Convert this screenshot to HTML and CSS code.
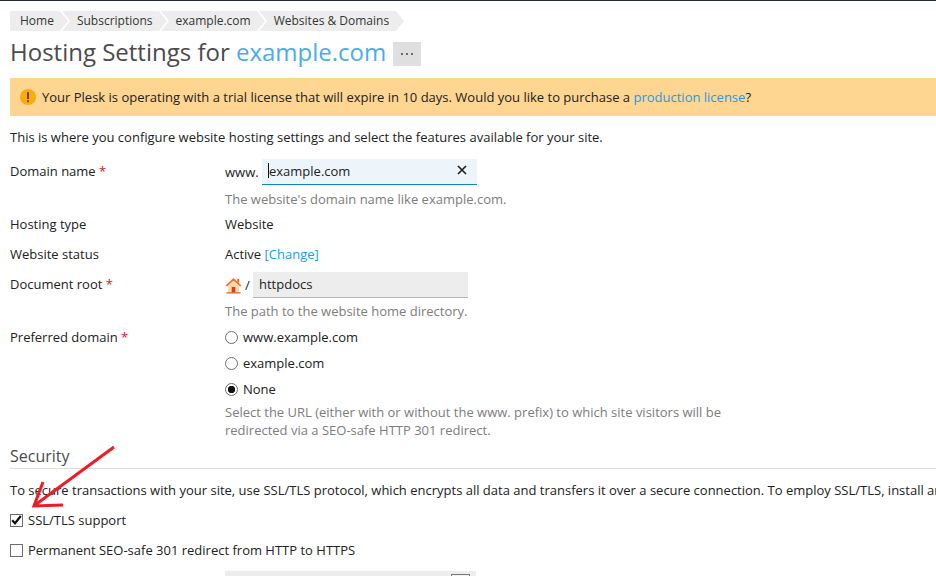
FILE: index.html
```html
<!DOCTYPE html>
<html lang="en">
<head>
<meta charset="utf-8">
<title>Hosting Settings for example.com</title>
<link rel="stylesheet" href="styles.css">
</head>
<body>
<div class="page">
  <nav class="crumbs">
    <a class="crumb first">Home</a>
    <a class="crumb">Subscriptions</a>
    <a class="crumb">example.com</a>
    <a class="crumb last">Websites &amp; Domains</a>
  </nav>
  <div class="title-row">
    <h1 class="title">Hosting Settings for <a class="title-link">example.com</a></h1>
    <button class="more" type="button" aria-label="More"><span class="dot"></span><span class="dot"></span><span class="dot"></span></button>
  </div>
  <div class="banner">
    <svg class="warn" width="16" height="16" viewBox="0 0 16 16"><circle cx="8" cy="8" r="8" fill="#fbab0e"/><rect x="7" y="3" width="2" height="7" fill="#6b4a05"/><rect x="7" y="11.2" width="2" height="2" fill="#6b4a05"/></svg>
    <span>Your Plesk is operating with a trial license that will expire in 10 days. Would you like to purchase a <a class="link">production license</a>?</span>
  </div>
  <p class="intro">This is where you configure website hosting settings and select the features available for your site.</p>

  <div class="form">
    <div class="label label-domain">Domain name <span class="req">*</span></div>
    <div class="field">
      <div class="line">
        <span class="www">www.</span>
        <div class="input active"><span class="caret"></span><span>example.com</span>
          <svg class="clear" width="10" height="10" viewBox="0 0 10 10"><path d="M1 1L9 9M9 1L1 9" stroke="#222" stroke-width="1.7"/></svg>
        </div>
      </div>
      <div class="hint hint-domain">The website's domain name like example.com.</div>
    </div>

    <div class="label label-type">Hosting type</div>
    <div class="field value value-type">Website</div>

    <div class="label label-status">Website status</div>
    <div class="field value value-status">Active <a class="link">[Change]</a></div>

    <div class="label label-root">Document root <span class="req">*</span></div>
    <div class="field field-root">
      <div class="line">
        <svg class="home" width="17" height="17" viewBox="0 0 17 17">
          <path d="M0.5 8.5L8.5 1L16.5 8.5L15 9.5L8.5 3.8L2 9.5Z" fill="#f0762a"/>
          <path d="M3 9L8.5 4.2L14 9V15.5H3Z" fill="#fdd9a8"/>
          <rect x="6.7" y="10" width="3.6" height="5.5" fill="#d8401a"/>
          <rect x="1.5" y="15.2" width="14" height="1.3" fill="#e2631f"/>
          <rect x="12.4" y="1.8" width="1.8" height="3.6" fill="#e2631f"/>
        </svg>
        <span class="slash">/</span>
        <div class="input readonly">httpdocs</div>
      </div>
      <div class="hint hint-root">The path to the website home directory.</div>
    </div>

    <div class="label label-pref">Preferred domain <span class="req">*</span></div>
    <div class="field field-pref">
      <div class="radio-row"><span class="radio"></span>www.example.com</div>
      <div class="radio-row"><span class="radio"></span>example.com</div>
      <div class="radio-row"><span class="radio on"></span>None</div>
      <div class="hint hint-pref">Select the URL (either with or without the www. prefix) to which site visitors will be<br>redirected via a SEO-safe HTTP 301 redirect.</div>
    </div>
  </div>

  <h2 class="section">Security</h2>
  <p class="sec-intro">To secure transactions with your site, use SSL/TLS protocol, which encrypts all data and transfers it over a secure connection. To employ SSL/TLS, install an</p>
  <div class="check-row">
    <span class="check on"><svg width="11" height="10" viewBox="0 0 11 10"><path d="M1.2 5.2L4 8.2L9.8 1" fill="none" stroke="#111" stroke-width="2.2"/></svg></span>SSL/TLS support
  </div>
  <div class="check-row second"><span class="check"></span>Permanent SEO-safe 301 redirect from HTTP to HTTPS</div>
  <div class="cert-row"><div class="select"><span class="select-btn"></span></div></div>

  <svg class="arrow" width="130" height="80" viewBox="0 0 130 80">
    <path d="M114 7L35 65M43 42L34 66L63 65" fill="none" stroke="#ee1c25" stroke-width="3"/>
  </svg>
</div>
</body>
</html>
```
FILE: styles.css
```css
* { box-sizing: border-box; }
html, body { margin: 0; padding: 0; overflow: hidden; background: #fff; }
body { width: 936px; height: 576px; font: 13px/18px "Open Sans", "Liberation Sans", sans-serif; color: #222; }
.page { position: relative; width: 936px; height: 576px; overflow: hidden; border-top: 1px solid #1f2933; padding: 10px 0 0 10px; }
a { text-decoration: none; }
.link { color: #1e9be6; }

.crumbs { display: flex; height: 20px; font-size: 12px; line-height: 20px; color: #353535; }
.crumb { position: relative; background: #ededed; padding: 0 6px 0 15px; margin-right: 2px; white-space: nowrap; }
.crumb::before { content: ""; position: absolute; z-index: 0; left: 0; top: 0; border-style: solid; border-width: 10px 0 10px 8px; border-color: transparent transparent transparent #fff; }
.crumb::after { content: ""; position: absolute; z-index: 1; left: 100%; top: 0; border-style: solid; border-width: 10px 0 10px 8px; border-color: transparent transparent transparent #ededed; }
.crumb.first { padding-left: 10px; padding-right: 6px; }
.crumb.first::before { display: none; }
.crumb.last { padding-right: 7px; }

.title-row { display: flex; align-items: center; margin-top: 4px; height: 34px; }
.title { margin: 0; font-size: 24px; line-height: 34px; font-weight: 400; color: #4b4b4b; white-space: nowrap; }
.title-link { color: #4aaceb; }
.more { display: flex; align-items: center; justify-content: center; gap: 3px; width: 28px; height: 24px; margin: 4px 0 0 7px; padding: 0; border: 0; background: #dfdfdf; }
.dot { width: 2px; height: 2px; background: #444; border-radius: 50%; }

.banner { display: flex; align-items: center; gap: 6px; height: 38px; margin-top: 9px; padding-left: 10px; background: #fed591; color: #222; white-space: nowrap; }
.warn { flex: none; }

.intro { margin: 12px 0 0; line-height: 18px; }

.form { display: grid; grid-template-columns: 215px 1fr; margin-top: 13px; }
.label, .field { min-width: 0; }
.req { color: #d9131a; }
.label-domain { padding-top: 3px; }
.line { display: flex; align-items: center; }
.www { width: 37px; }
.input { position: relative; display: flex; align-items: center; height: 26px; }
.active { width: 215px; padding: 0 0 2px 6px; background: #edf5fb; border-bottom: 1px solid #0a87c8; }
.caret { width: 1px; height: 15px; background: #111; }
.clear { position: absolute; right: 10px; top: 6px; }
.hint { color: #7d7d7d; line-height: 18px; }
.hint-domain { margin-top: 5px; }
.label-type, .value-type { margin-top: 7px; }
.label-status, .value-status { margin-top: 12px; }
.label-root { margin-top: 12px; }
.field-root { margin-top: 9px; }
.home { flex: none; }
.slash { width: 11px; padding-left: 3px; }
.readonly { width: 215px; padding: 0 0 2px 6px; background: #ededed; border-bottom: 1px solid #b5b5b5; }
.hint-root { margin-top: 4px; }
.label-pref { margin-top: 8px; }
.field-pref { margin-top: 8px; }
.radio-row { display: flex; align-items: center; height: 18px; margin-bottom: 8px; }
.radio { width: 13px; height: 13px; margin-right: 5px; border: 1px solid #6d6d6d; border-radius: 50%; background: #fff; }
.radio.on { background: radial-gradient(circle, #111 0, #111 3.4px, #fff 4px); }
.hint-pref { margin-top: -3px; line-height: 18px; }

.section { margin: 6px 0 0; height: 24px; font-size: 16px; line-height: 22px; font-weight: 400; color: #4b4b4b; border-bottom: 1px solid #dcdcdc; }
.sec-intro { margin: 12px 0 0; white-space: nowrap; }
.check-row { display: flex; align-items: center; height: 18px; margin-top: 12px; }
.check-row.second { margin-top: 12px; }
.check { display: flex; align-items: center; justify-content: center; width: 13px; height: 13px; margin-right: 5px; border: 1px solid #6d6d6d; background: #fff; }
.cert-row { margin: 12px 0 0 215px; }
.select { position: relative; width: 251px; height: 20px; background: #ededed; }
.select-btn { position: absolute; right: 6px; top: 3px; width: 19px; height: 19px; border: 1px solid #777; background: #f2f2f2; }

.arrow { position: absolute; left: 0; top: 439px; }
```
